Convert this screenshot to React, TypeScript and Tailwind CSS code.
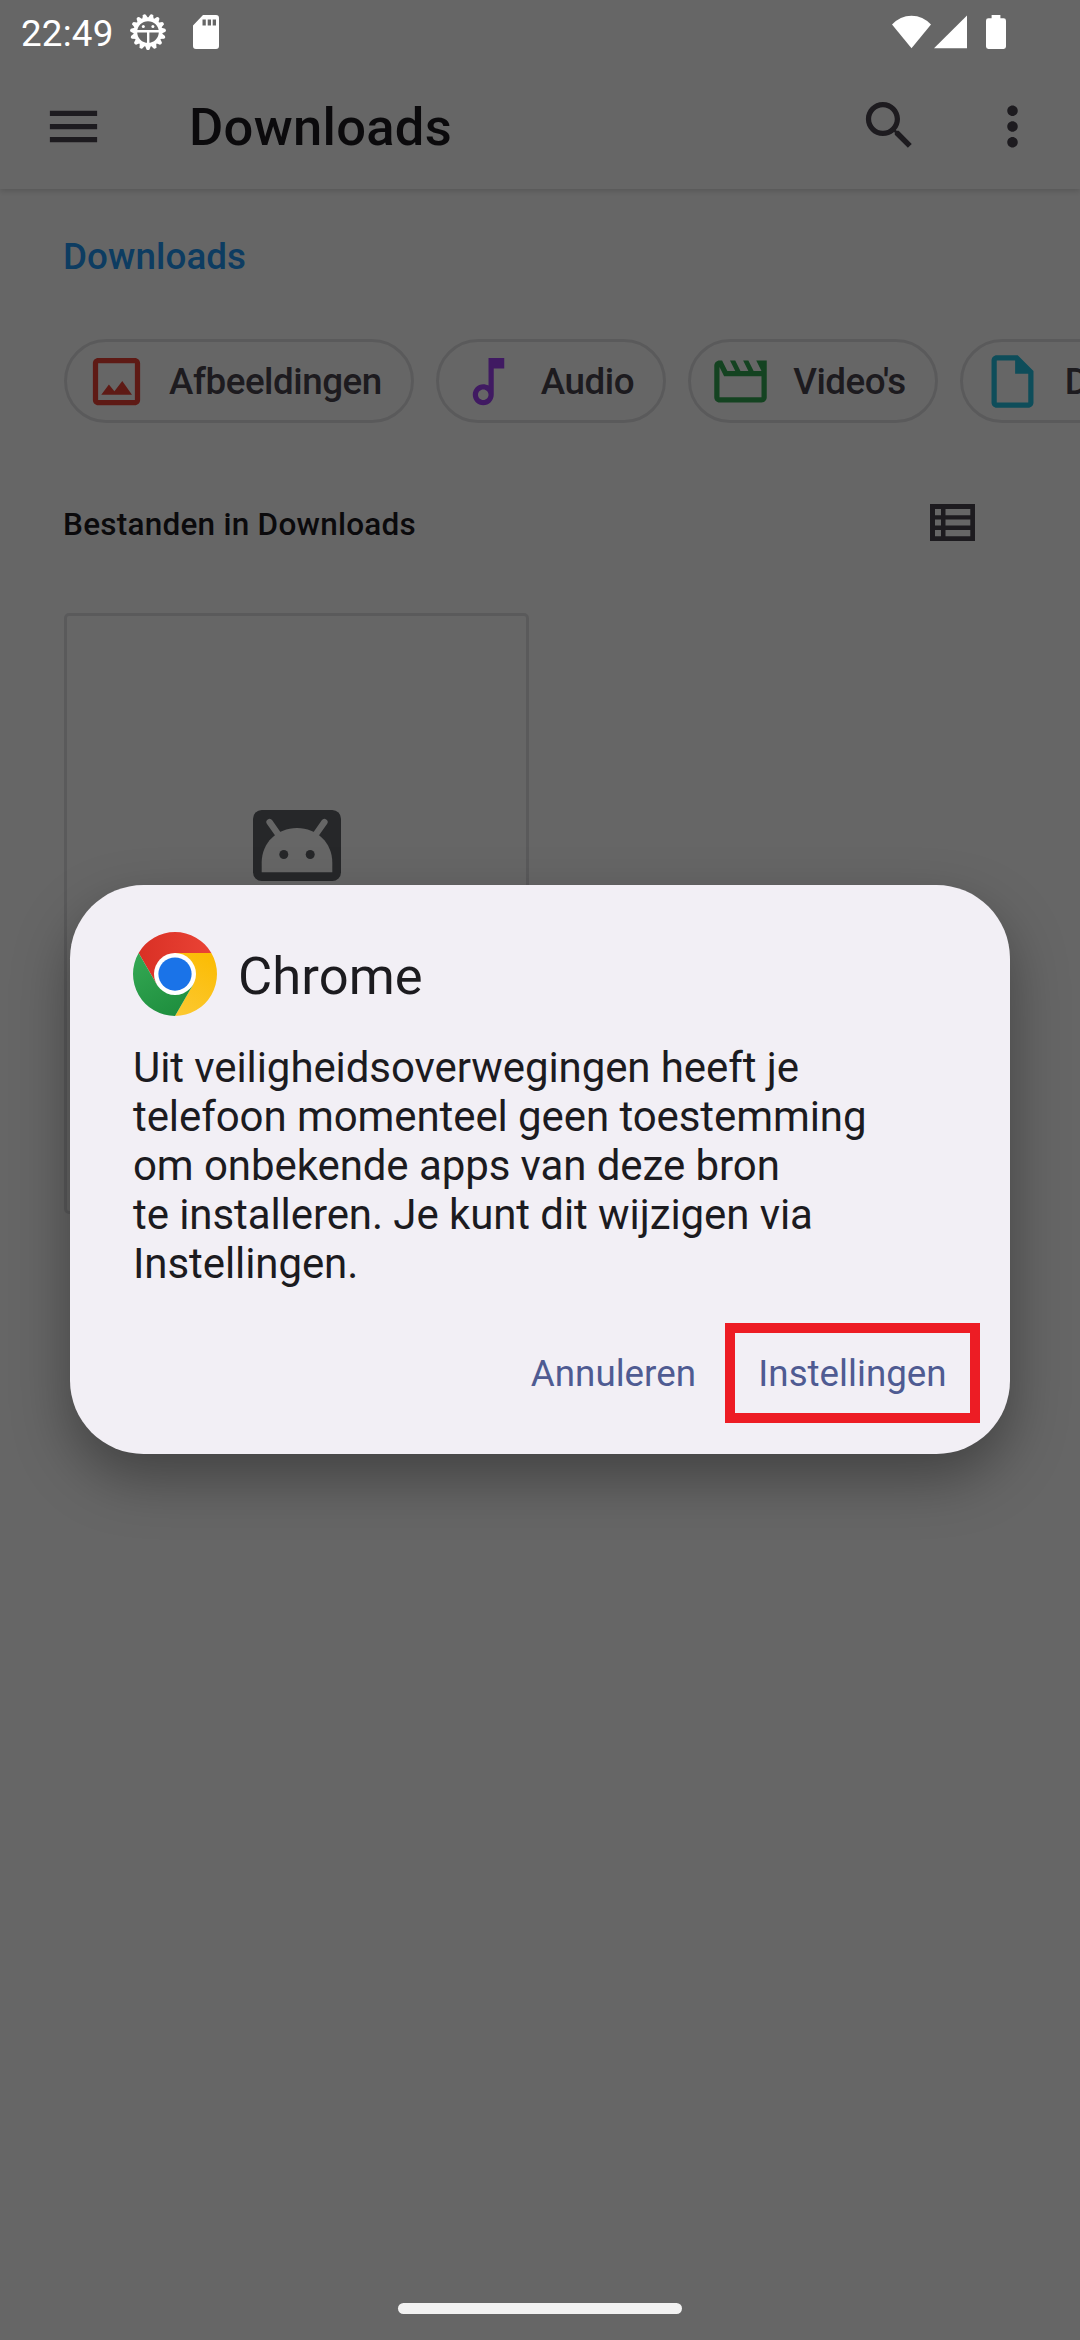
import type { ReactNode } from "react";

function Icon({ d, className, size = 63 }: { d: string; className?: string; size?: number }) {
  return (
    <svg width={size} height={size} viewBox="0 0 24 24" fill="currentColor" fillRule="evenodd" className={className}>
      <path d={d} />
    </svg>
  );
}

const paths = {
  menu: "M3 18h18v-2H3v2zm0-5h18v-2H3v2zm0-7v2h18V6H3z",
  search:
    "M15.5 14h-.79l-.28-.27C15.41 12.59 16 11.11 16 9.5 16 5.91 13.09 3 9.5 3S3 5.91 3 9.5 5.91 16 9.5 16c1.61 0 3.09-.59 4.23-1.57l.27.28v.79l5 4.99L20.49 19l-4.99-5zm-6 0C7.01 14 5 11.99 5 9.5S7.01 5 9.5 5 14 7.01 14 9.5 11.99 14 9.5 14z",
  more: "M12 8c1.1 0 2-.9 2-2s-.9-2-2-2-2 .9-2 2 .9 2 2 2zm0 2c-1.1 0-2 .9-2 2s.9 2 2 2 2-.9 2-2-.9-2-2-2zm0 6c-1.1 0-2 .9-2 2s.9 2 2 2 2-.9 2-2-.9-2-2-2z",
  image:
    "M19 3H5c-1.1 0-2 .9-2 2v14c0 1.1.9 2 2 2h14c1.1 0 2-.9 2-2V5c0-1.1-.9-2-2-2zm0 16H5V5h14v14zM6.2 17h11.7l-3.7-5.2-3 3.9-2.1-2.6z",
  audio:
    "M12 3l.01 10.55c-.59-.34-1.27-.55-2-.55C7.79 13 6 14.79 6 17s1.79 4 4.01 4S14 19.21 14 17V7h4V3h-6zm-1.99 16c-1.1 0-2-.9-2-2s.9-2 2-2 2 .9 2 2-.9 2-2 2z",
  video:
    "M4 6.47L5.76 10H20v8H4V6.47M22 4h-4l2 4h-3l-2-4h-2l2 4h-3l-2-4H8l2 4H7L5 4H4c-1.1 0-1.99.9-1.99 2L2 18c0 1.1.9 2 2 2h16c1.1 0 2-.9 2-2V4z",
  doc: "M14 2H6c-1.1 0-1.99.9-1.99 2L4 20c0 1.1.89 2 1.99 2H18c1.1 0 2-.9 2-2V8l-6-6zM6 20V4h7v5h5v11H6z",
};

function StatusBar() {
  const teeth = Array.from({ length: 15 }, (_, i) => (i * 360) / 15);
  return (
    <div className="relative z-20 flex h-[63px] items-center text-white">
      <span className="ml-[21px] w-[108px] pt-[3px] text-[36.75px] leading-[43px] tracking-[0.2px]">22:49</span>
      <svg width="38" height="38" viewBox="-19 -19 38 38" className="shrink-0">
        {teeth.map((a) => (
          <path key={a} d="M-3.2 13L-1.5 17.400Q0 18.800 1.500 17.400L3.200 13z" fill="white" transform={`rotate(${a})`} />
        ))}
        <circle r="12.600" fill="none" stroke="white" strokeWidth="3.600" />
        <path d="M-11 -.8H11M.2 -.8V11" stroke="white" strokeWidth="2.400" />
        <circle cx="-4.700" cy="-5.600" r="1.500" fill="white" />
        <circle cx="4.900" cy="-5.600" r="1.500" fill="white" />
      </svg>
      <svg width="26" height="34" viewBox="0 0 26 34" className="ml-[26px] shrink-0" fill="white" fillRule="evenodd">
        <path d="M10 0H23Q26 0 26 3V31Q26 34 23 34H3Q0 34 0 31V10.500zM9.500 4.500v6h3.300v-6zM14.700 4.500v6h3.300v-6zM19.700 4.500v6h3.300v-6z" />
      </svg>
      <svg width="39" height="34" viewBox="0 0 39 34" className="ml-auto" fill="white">
        <path d="M19.500 33.200L0 9.600Q8 .7 19.500 .7T39 9.600z" />
      </svg>
      <svg width="33" height="34" viewBox="0 0 33 34" className="ml-[3px]" fill="white">
        <path d="M33 .5V33.300H0z" />
      </svg>
      <svg width="20" height="34" viewBox="0 0 20 34" className="ml-[19px] mr-[74px]" fill="white">
        <path d="M5.600 0h8.800v3.300h3.200Q20 3.300 20 5.700V31.600Q20 34 17.600 34H2.400Q0 34 0 31.600V5.700Q0 3.300 2.400 3.300H5.600z" />
      </svg>
    </div>
  );
}

function Chip({ icon, color, children }: { icon: string; color: string; children: ReactNode }) {
  return (
    <div className="flex h-[84px] shrink-0 items-center rounded-full border-[3px] border-[#e2e2e4] pl-[18px] pr-[29px]">
      <Icon d={icon} className={color} />
      <span className="ml-[21px] text-[36.75px] font-medium leading-[43px] tracking-[-0.45px] text-[#49454f]">
        {children}
      </span>
    </div>
  );
}

function ListViewIcon() {
  return (
    <svg width="45" height="37" viewBox="0 0 45 37" fill="currentColor" fillRule="evenodd">
      <path d="M0 0H45V37H0zM5 5v6.200h6V5zM5 15.400v6.200h6v-6.200zM5 26v6.200h6V26zM15.500 5v6.200H40.300V5zM15.500 15.400v6.200H40.300v-6.200zM15.500 26v6.200H40.300V26z" />
    </svg>
  );
}

function ApkIcon() {
  return (
    <svg width="88" height="71" viewBox="0 0 88 71">
      <rect width="88" height="71" rx="8.700" fill="#5f6368" />
      <path d="M8.700 62.300V52.500C8.700 33 24 18 44 18S79.300 33 79.300 52.500V62.300z" fill="white" />
      <path d="M16.600 12.200L26 25.500M71.400 12.200L62 25.500" stroke="white" strokeWidth="6.400" strokeLinecap="round" />
      <circle cx="30.800" cy="44.500" r="4.500" fill="#5f6368" />
      <circle cx="57.200" cy="44.500" r="4.500" fill="#5f6368" />
    </svg>
  );
}

function ChromeLogo() {
  return (
    <svg width="84" height="84" viewBox="0 0 48 48" className="shrink-0">
      <defs>
        <linearGradient id="red" x1="3.200" y1="0" x2="44.800" y2="0" gradientUnits="userSpaceOnUse">
          <stop offset="0" stopColor="#d93025" />
          <stop offset="1" stopColor="#ea4335" />
        </linearGradient>
        <linearGradient id="yellow" x1="20.700" y1="47.700" x2="41.500" y2="11.700" gradientUnits="userSpaceOnUse">
          <stop offset="0" stopColor="#fcc934" />
          <stop offset="1" stopColor="#fbbc04" />
        </linearGradient>
        <linearGradient id="green" x1="26.600" y1="46.500" x2="5.800" y2="10.500" gradientUnits="userSpaceOnUse">
          <stop offset="0" stopColor="#1e8e3e" />
          <stop offset="1" stopColor="#34a853" />
        </linearGradient>
      </defs>
      <path d="M24 12H44.780A24 24 0 0 0 3.220 12L13.610 30z" fill="url(#red)" />
      <path d="M34.390 30L24 48A24 24 0 0 0 44.780 12H24z" fill="url(#yellow)" />
      <path d="M13.610 30L3.220 12A24 24 0 0 0 24 48L34.390 30z" fill="url(#green)" />
      <circle cx="24" cy="24" r="12" fill="white" />
      <circle cx="24" cy="24" r="9.500" fill="#1a73e8" />
    </svg>
  );
}

function PermissionDialog() {
  return (
    <div className="mb-[1px] flex h-[569px] w-[940px] flex-col rounded-[73.5px] bg-[#f2eff5] px-[63px] pt-[47px] text-[#1c1b1f] shadow-[0_24px_56px_rgba(0,0,0,0.35)]">
      <div className="flex items-center">
        <ChromeLogo />
        <h2 className="ml-[21px] pt-[4px] text-[52.5px] leading-[62px] tracking-[0.1px]">Chrome</h2>
      </div>
      <p className="mt-[27px] whitespace-nowrap text-[42px] leading-[49px] tracking-[-0.08px]">
        Uit veiligheidsoverwegingen heeft je
        <br />
        telefoon momenteel geen toestemming
        <br />
        om onbekende apps van deze bron
        <br />
        te installeren. Je kunt dit wijzigen via
        <br />
        Instellingen.
      </p>
      <div className="-mr-[33px] mt-[35px] flex items-center justify-end gap-[29px] text-[36.75px] leading-[43px] text-[#4f5b92]">
        <button>Annuleren</button>
        <button className="h-[100px] w-[255px] border-[10px] border-[#ed1c24]">Instellingen</button>
      </div>
    </div>
  );
}

export default function App() {
  return (
    <div className="relative flex h-[2340px] w-[1080px] flex-col overflow-hidden bg-white font-[Roboto,sans-serif] text-[#1c1b1f]">
      <StatusBar />
      <header className="flex h-[126px] shrink-0 items-center pl-[42px] pr-[36px] text-[#49454f] shadow-[0_2px_6px_rgba(0,0,0,0.16)] [clip-path:inset(0_0_-14px_0)]">
        <Icon d={paths.menu} />
        <h1 className="ml-[84px] pt-[2px] text-[52.5px] font-medium leading-[62px] tracking-[0.3px] text-[#1c1b1f]">
          Downloads
        </h1>
        <Icon d={paths.search} className="relative -top-[1px] ml-auto" />
        <Icon d={paths.more} className="ml-[60px]" />
      </header>
      <main className="flex flex-col pl-[64px]">
        <nav className="-ml-[1px] mt-[46px] text-[36.75px] font-medium leading-[43px] tracking-[0.1px] text-[#2196f3]">
          Downloads
        </nav>
        <div className="mt-[61px] flex gap-[22px]">
          <Chip icon={paths.image} color="text-[#ea4335]">Afbeeldingen</Chip>
          <Chip icon={paths.audio} color="text-[#a142f4]">Audio</Chip>
          <Chip icon={paths.video} color="text-[#34a853]">Video's</Chip>
          <Chip icon={paths.doc} color="text-[#24c1e0]">Documenten</Chip>
        </div>
        <div className="-ml-[1px] mt-[81px] flex h-[37px] items-center justify-between pr-[105px] text-[#49454f]">
          <h2 className="pt-[3px] text-[31.5px] font-medium leading-[37px] tracking-[0.25px] text-[#1c1b1f]">
            Bestanden in Downloads
          </h2>
          <ListViewIcon />
        </div>
        <div className="mt-[72px] flex h-[601px] w-[465px] flex-col items-center rounded-[5px] border-[3px] border-[#e2e2e4] pt-[194px]">
          <ApkIcon />
        </div>
      </main>
      <div className="absolute inset-0 z-10 flex items-center justify-center bg-black/60">
        <PermissionDialog />
      </div>
      <div className="relative z-20 mb-[26px] mt-auto h-[11px] w-[284px] self-center rounded-full bg-[#f2f2f2]" />
    </div>
  );
}
